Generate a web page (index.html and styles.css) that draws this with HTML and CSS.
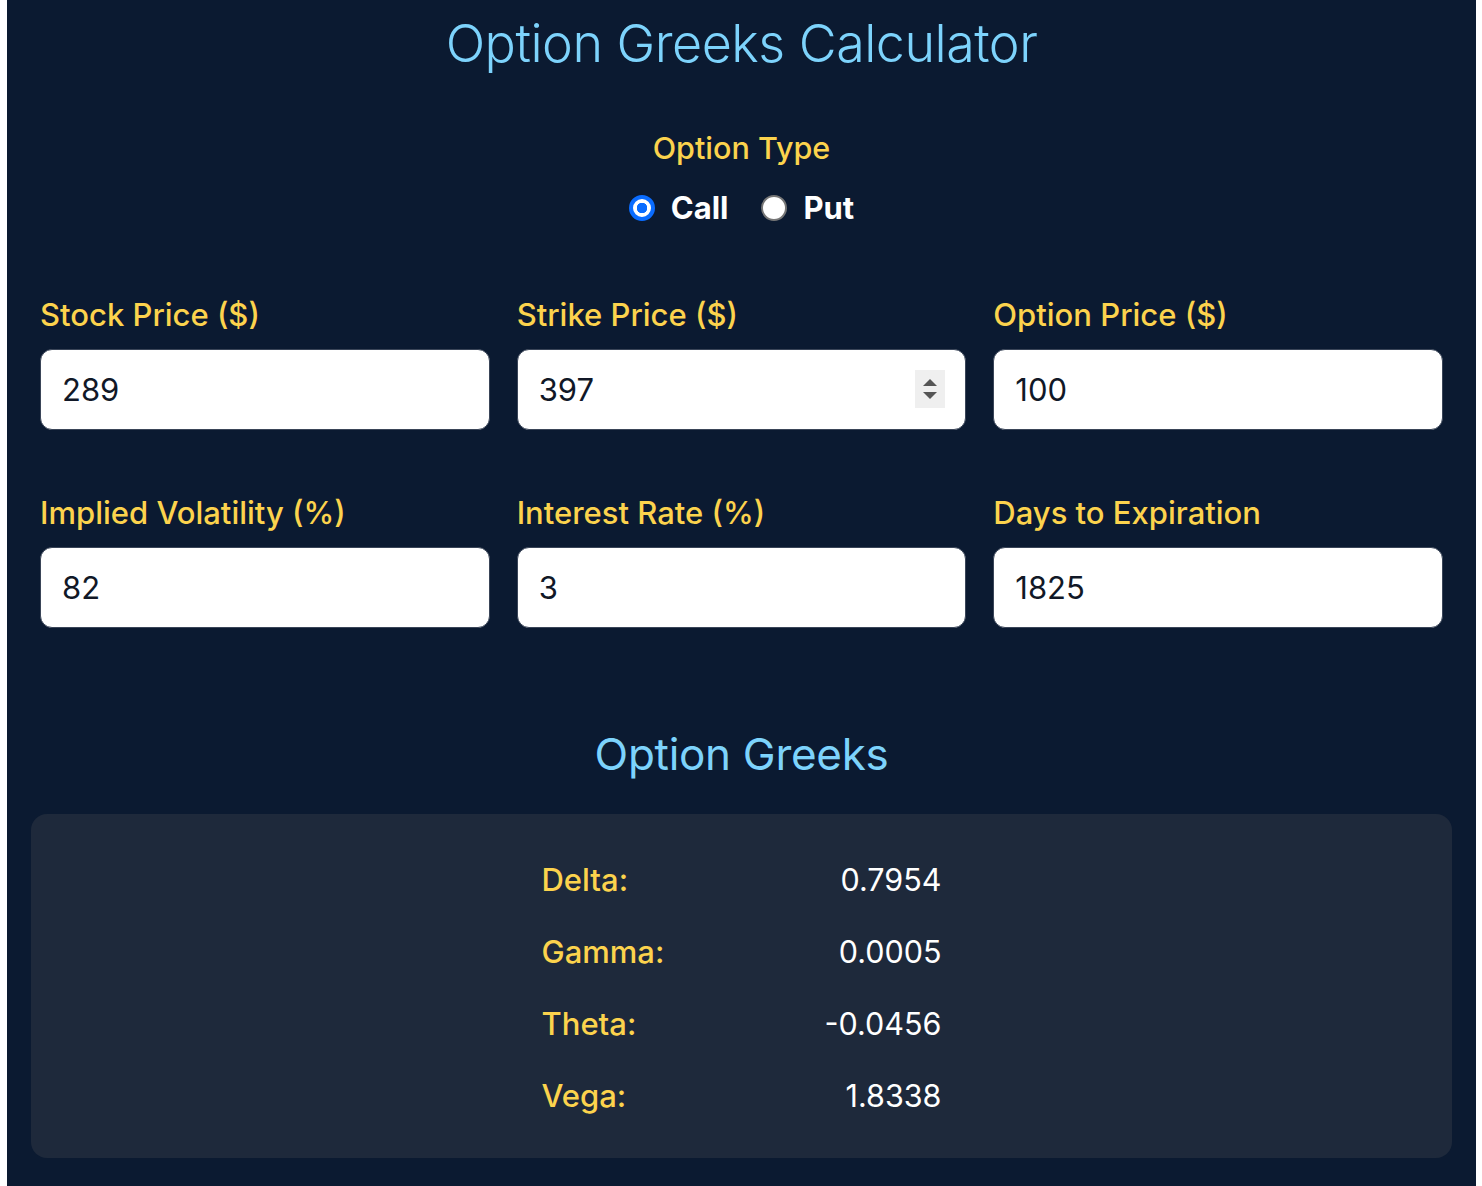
FILE: index.html
```html
<!DOCTYPE html>
<html lang="en">
<head>
<meta charset="utf-8">
<title>Option Greeks Calculator</title>
<link rel="stylesheet" href="styles.css">
</head>
<body>
<main class="app">
  <h1 class="title">Option Greeks Calculator</h1>

  <section class="type">
    <div class="type-label">Option Type</div>
    <div class="radios">
      <label class="radio"><span class="dot checked"></span><span class="radio-text">Call</span></label>
      <label class="radio"><span class="dot"></span><span class="radio-text">Put</span></label>
    </div>
  </section>

  <section class="fields">
    <div class="field">
      <label class="field-label">Stock Price ($)</label>
      <div class="input"><span class="input-value">289</span></div>
    </div>
    <div class="field">
      <label class="field-label">Strike Price ($)</label>
      <div class="input"><span class="input-value">397</span>
        <span class="spinner">
          <svg width="30" height="38" viewBox="0 0 30 38"><path d="M8 16 L15 9 L22 16 Z" fill="#555"/><path d="M8 22 L15 29 L22 22 Z" fill="#555"/></svg>
        </span>
      </div>
    </div>
    <div class="field">
      <label class="field-label">Option Price ($)</label>
      <div class="input"><span class="input-value">100</span></div>
    </div>
    <div class="field">
      <label class="field-label">Implied Volatility (%)</label>
      <div class="input"><span class="input-value">82</span></div>
    </div>
    <div class="field">
      <label class="field-label">Interest Rate (%)</label>
      <div class="input"><span class="input-value">3</span></div>
    </div>
    <div class="field">
      <label class="field-label">Days to Expiration</label>
      <div class="input"><span class="input-value">1825</span></div>
    </div>
  </section>

  <h2 class="subtitle">Option Greeks</h2>

  <section class="card">
    <div class="greeks">
      <div class="greek"><span class="greek-name">Delta:</span><span class="greek-val">0.7954</span></div>
      <div class="greek"><span class="greek-name">Gamma:</span><span class="greek-val">0.0005</span></div>
      <div class="greek"><span class="greek-name">Theta:</span><span class="greek-val">-0.0456</span></div>
      <div class="greek"><span class="greek-name">Vega:</span><span class="greek-val">1.8338</span></div>
    </div>
  </section>
</main>
</body>
</html>
```
FILE: styles.css
```css
* { box-sizing: border-box; }
html, body { margin: 0; padding: 0; background: #ffffff; }
body { font-family: Inter, "Noto Sans", "Liberation Sans", sans-serif; }

.app {
  margin-left: 7px;
  width: 1469px;
  min-height: 1186px;
  background: #0b1a31;
  padding: 12px 24px 24px;
  display: flex;
  flex-direction: column;
}

.title {
  margin: 0;
  text-align: center;
  font-size: 52px;
  font-weight: 300;
  color: #7dd3fc;
  line-height: 64px;
  letter-spacing: -0.5px;
}

.type {
  margin-top: 54px;
  display: flex;
  flex-direction: column;
  align-items: center;
}
.type-label {
  color: #fcd34d;
  font-size: 30.5px;
  font-weight: 500;
  line-height: 36px;
}
.radios {
  margin-top: 24px;
  display: flex;
  gap: 33px;
  align-items: center;
}
.radio { display: flex; align-items: center; gap: 16px; }
.dot {
  width: 26px; height: 26px; border-radius: 50%;
  background: #fff;
  border: 2px solid #767676;
  display: inline-block;
}
.dot.checked {
  border: 4px solid #0a6cff;
  background: radial-gradient(circle, #0a6cff 0 5px, #fff 5.5px);
}
.radio-text { color: #fff; font-size: 31px; font-weight: 700; line-height: 36px; }

.fields {
  margin-top: 71px;
  padding: 0 9px;
  display: grid;
  grid-template-columns: repeat(3, 1fr);
  column-gap: 27px;
  row-gap: 65px;
}
.field { display: flex; flex-direction: column; }
.field-label {
  color: #fcd34d;
  font-size: 31px;
  font-weight: 500;
  line-height: 36px;
  margin-bottom: 16px;
}
.input {
  position: relative;
  height: 81px;
  background: #fff;
  border: 1px solid #3a4558;
  border-radius: 12px;
  padding: 0 21px;
  display: flex;
  align-items: center;
}
.input-value { color: #111827; font-size: 31px; font-weight: 400; }
.spinner {
  position: absolute;
  right: 20px;
  top: 20px;
  width: 30px;
  height: 38px;
  background: #efefef;
  display: block;
}
.spinner svg { display: block; }

.subtitle {
  margin: 98px 0 0;
  text-align: center;
  font-size: 44px;
  font-weight: 400;
  color: #7dd3fc;
  line-height: 56px;
  letter-spacing: -0.3px;
}

.card {
  margin-top: 32px;
  background: #1e293b;
  border-radius: 16px;
  padding: 29px 0 27px;
  display: flex;
  justify-content: center;
}
.greeks { width: 400px; display: flex; flex-direction: column; }
.greek {
  display: flex;
  justify-content: space-between;
  align-items: center;
  height: 72px;
}
.greek-name { color: #fcd34d; font-size: 31px; font-weight: 500; }
.greek-val { color: #fff; font-size: 30.5px; font-weight: 400; }
```
